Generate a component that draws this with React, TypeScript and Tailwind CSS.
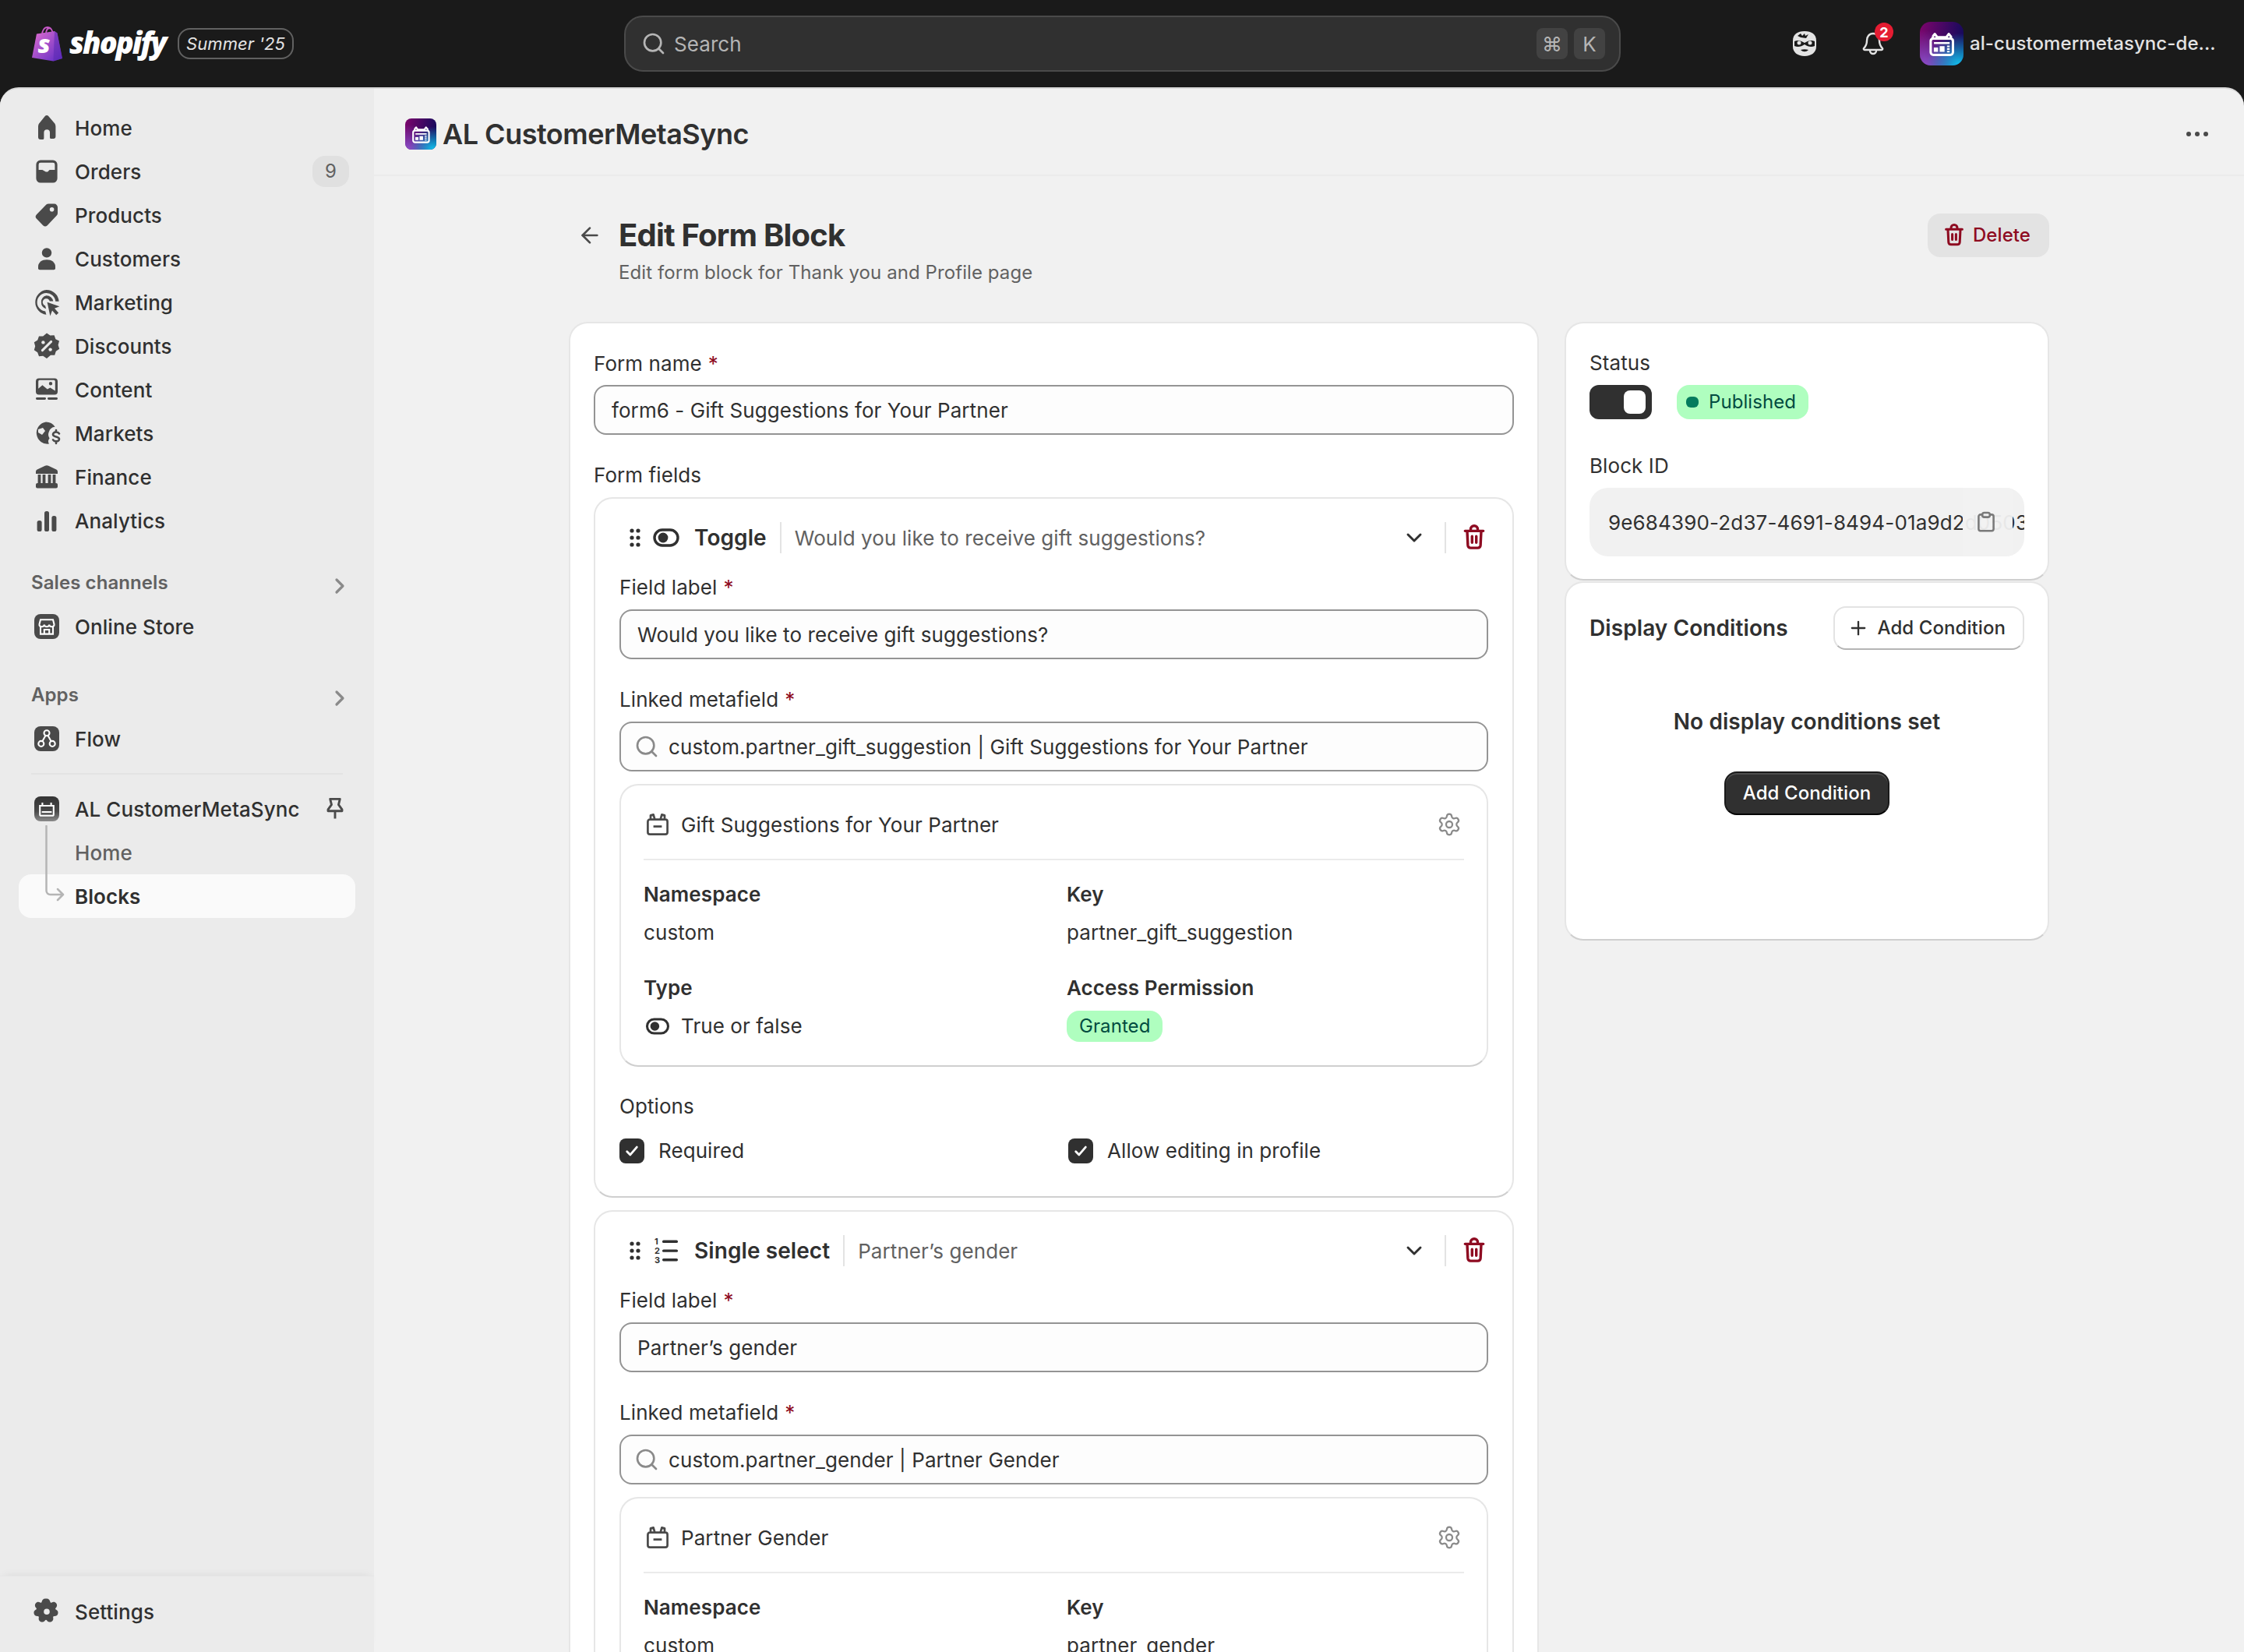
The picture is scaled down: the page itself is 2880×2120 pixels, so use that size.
import { ArrowLeft, ChevronDown, ChevronRight, Plus, Search, Settings as SettingsOutline } from "lucide-react"
import type { ReactNode } from "react"

const Icon20 = ({ children, className = "w-10 h-10 text-[#4a4a4a]" }: { children: ReactNode; className?: string }) => (
  <svg viewBox="0 0 20 20" fill="currentColor" className={className}>
    {children}
  </svg>
)

const navIcons: Record<string, ReactNode> = {
  Home: (
    <path d="M8.700 2.700a1.800 1.800 0 0 1 2.600 0l3.400 4c.7.7 1 1.600 1 2.500v6.300a1.500 1.500 0 0 1-1.500 1.500h-1.400a.8.8 0 0 1-.8-.8V13a1.900 1.900 0 0 0-3.800 0v3.700a.8.8 0 0 1-.8.8H6a1.500 1.500 0 0 1-1.500-1.500V9.200c0-.9.300-1.800 1-2.500z" />
  ),
  Orders: (
    <path
      fillRule="evenodd"
      d="M6 2.800A2.800 2.800 0 0 0 3.200 5.600v8.900A2.800 2.800 0 0 0 6 17.300h8a2.800 2.800 0 0 0 2.800-2.800V5.600A2.800 2.800 0 0 0 14 2.800zM4.800 5.600A1.200 1.200 0 0 1 6 4.400h8a1.200 1.200 0 0 1 1.200 1.200V9h-3.400l-1.200 1.300h-1.200L7.200 9H4.800z"
    />
  ),
  Products: (
    <path
      fillRule="evenodd"
      d="M11.200 2.800h3.600A2.200 2.200 0 0 1 17 5v3.700c0 .6-.2 1.100-.6 1.500l-6 6.400a2 2 0 0 1-2.800 0l-4.100-4.200a2 2 0 0 1 0-2.800l6.200-6.300c.4-.3.900-.5 1.500-.5zM13.300 5a1.400 1.400 0 1 0 0 2.800 1.400 1.400 0 0 0 0-2.800z"
    />
  ),
  Customers: (
    <>
      <circle cx="10" cy="6.200" r="3.100" />
      <path d="M4.500 15c0-2.700 2.400-4.400 5.500-4.400s5.500 1.700 5.500 4.400v1.100a1 1 0 0 1-1 1h-9a1 1 0 0 1-1-1z" />
    </>
  ),
  Marketing: (
    <>
      <path d="M9.800 2a8 8 0 0 1 8 7.400h-2.200a5.900 5.900 0 1 0-6.500 6.400l.6 2.100A8 8 0 0 1 9.800 2z" />
      <path d="M9.800 5.600a4.400 4.400 0 0 1 4.300 3.700h-2.200a2.300 2.300 0 1 0-2.900 2.800l.6 2A4.400 4.400 0 0 1 9.800 5.600z" />
      <path d="M10.300 9.900l7.900 2.700-3.200 1.300 2.600 2.800-1.500 1.400-2.600-2.800-1.300 3.400z" />
    </>
  ),
  Discounts: (
    <>
      <path d="M10 1.800l2.200 1.500 2.600-.2.900 2.500 2.300 1.200-.7 2.600.8 2.500-2.200 1.500-.8 2.500-2.600 0L10 18l-2.400-1.600-2.600.2-.9-2.500-2.200-1.500.7-2.500-.7-2.500 2.200-1.400.9-2.500 2.600.1z" />
      <path d="M12.800 7.200l-5.600 5.600" stroke="#ebebeb" strokeWidth="1.500" strokeLinecap="round" />
      <circle cx="7.700" cy="7.700" r="1.100" fill="#ebebeb" />
      <circle cx="12.300" cy="12.300" r="1.100" fill="#ebebeb" />
    </>
  ),
  Content: (
    <>
      <path
        fillRule="evenodd"
        d="M5 2.800h10a2 2 0 0 1 2 2v6.400a2 2 0 0 1-2 2H5a2 2 0 0 1-2-2V4.800a2 2 0 0 1 2-2zm-.4 6.600 2.600-2.300 3.200 2.600 1.800-1 3.200 2v-6a.8.8 0 0 0-.8-.8H5.400a.8.8 0 0 0-.8.8zM12.500 5a1.100 1.100 0 1 0 0 2.200 1.100 1.100 0 0 0 0-2.200z"
      />
      <rect x="3" y="15" width="6.500" height="1.500" rx=".7" />
      <rect x="10.500" y="15" width="6.500" height="1.500" rx=".7" />
    </>
  ),
  Markets: (
    <>
      <path d="M9.500 2.800a7 7 0 0 1 5.800 3.100 4.500 4.500 0 0 0-3.900 3.200 4 4 0 0 0 .4 4.100 3 3 0 0 0-.3 3.600 7 7 0 1 1-2-14z" />
      <path d="M4.500 7.500l3-1 1.500 2-2 2.500-2.500-1.500z" fill="#ebebeb" />
      <path d="M18 10.200c-.5-.7-1.300-1-2-1-1.100 0-2 .6-2 1.500 0 2 4 1 4 3 0 .9-.9 1.500-2 1.500-.8 0-1.600-.3-2-1M16 8v1.200M16 15.200v1.300" fill="none" stroke="currentColor" strokeWidth="1.300" strokeLinecap="round" />
    </>
  ),
  Finance: (
    <>
      <path d="M8.900 2.900a2.500 2.500 0 0 1 2.200 0l5 2.400c.6.300.9.900.9 1.400v1.300H3V6.700c0-.5.300-1.100.9-1.400z" />
      <rect x="4.300" y="8.500" width="1.900" height="5.500" />
      <rect x="7.300" y="8.500" width="1.900" height="5.500" />
      <rect x="10.800" y="8.500" width="1.900" height="5.500" />
      <rect x="13.800" y="8.500" width="1.900" height="5.500" />
      <rect x="3" y="14" width="14" height="3.200" rx="1" />
    </>
  ),
  Analytics: (
    <>
      <rect x="3.800" y="10" width="3" height="7" rx="1.300" />
      <rect x="8.500" y="4" width="3" height="13" rx="1.300" />
      <rect x="13.200" y="7" width="3" height="10" rx="1.300" />
    </>
  ),
  Settings: (
    <path
      fillRule="evenodd"
      d="M10 1.800c1.200 0 2 .9 2.200 2 .1.500.6.800 1 .5.900-.6 2.100-.6 2.900.4.800 1 .5 2.200-.3 3-.4.300-.3.900.1 1.100 1 .5 1.600 1.400 1.300 2.600-.3 1.200-1.300 1.700-2.400 1.600-.5 0-.9.400-.7.900.3 1.100-.1 2.200-1.200 2.700-1.100.5-2.200 0-2.800-.9-.3-.4-.9-.4-1.200 0-.6.900-1.700 1.400-2.800.9-1.100-.5-1.500-1.600-1.200-2.700.2-.5-.2-.9-.7-.9-1.100.1-2.100-.4-2.400-1.600-.3-1.200.3-2.100 1.300-2.600.4-.2.500-.8.100-1.100-.8-.8-1.100-2-.3-3 .8-1 2-1 2.900-.4.400.3.900 0 1-.5.200-1.100 1-2 2.200-2zm0 6.400a1.900 1.900 0 1 0 0 3.800 1.900 1.900 0 0 0 0-3.800z"
    />
  ),
}

const NavRow = ({ label, badge }: { label: string; badge?: string }) => (
  <div className="flex items-center h-14 mx-6 pl-4 pr-2 text-[26px] font-medium text-[#303030]">
    <Icon20>{navIcons[label]}</Icon20>
    <span className="ml-4">{label}</span>
    {badge && (
      <span className="ml-auto flex items-center justify-center w-[47px] h-10 rounded-2xl bg-[#e0e0e0] text-[24px] font-normal text-[#616161]">
        {badge}
      </span>
    )}
  </div>
)

const SectionHead = ({ label, className }: { label: string; className: string }) => (
  <div className={`flex items-center justify-between h-14 pl-10 pr-7 ${className}`}>
    <span className="text-[24px] font-semibold text-[#616161]">{label}</span>
    <ChevronRight className="w-8 h-8 mt-2 text-[#8a8a8a]" strokeWidth={2.4} />
  </div>
)

const TileIcon = ({ children, grad }: { children: ReactNode; grad?: boolean }) => (
  <div
    className={`flex items-center justify-center w-8 h-8 ml-1 rounded-lg ${
      grad ? "bg-[linear-gradient(180deg,#333_0%,#4a4a4a_60%,#8a8a8a_100%)]" : "bg-[#4a4a4a]"
    }`}
  >
    <svg viewBox="0 0 20 20" fill="none" stroke="white" strokeWidth="1.300" className="w-8 h-8">
      {children}
    </svg>
  </div>
)

const Sidebar = () => (
  <aside className="flex flex-col w-[480px] h-full bg-[#ebebeb]">
    <div className="pt-[22px]">
      {["Home", "Orders", "Products", "Customers", "Marketing", "Discounts", "Content", "Markets", "Finance", "Analytics"].map(
        (item) => (
          <NavRow key={item} label={item} badge={item === "Orders" ? "9" : undefined} />
        ),
      )}
      <SectionHead label="Sales channels" className="mt-6" />
      <div className="flex items-center h-14 mx-6 pl-4 text-[26px] font-medium text-[#303030]">
        <div className="flex items-center w-10">
          <TileIcon>
            <path d="M4 8.500 5 4.500h10l1 4M4 8.500c0 2.200 4 2.200 4 0 0 2.200 4 2.200 4 0 0 2.200 4 2.200 4 0M5 10.500V16h10v-5.500M8 16v-3.500h4V16" />
          </TileIcon>
        </div>
        <span className="ml-4">Online Store</span>
      </div>
      <SectionHead label="Apps" className="mt-8" />
      <div className="flex items-center h-14 mx-6 pl-4 text-[26px] font-medium text-[#303030]">
        <div className="flex items-center w-10">
          <TileIcon>
            <circle cx="10" cy="5.500" r="2.200" />
            <circle cx="5.500" cy="14" r="2.200" />
            <circle cx="14.500" cy="14" r="2.200" />
            <path d="M9 7.500 6.500 12M11 7.500l2.500 4.500" />
          </TileIcon>
        </div>
        <span className="ml-4">Flow</span>
      </div>
      <div className="h-0.5 mx-10 mt-4 bg-[#e3e3e3]" />
      <div className="relative mt-4">
        <div className="flex items-center h-14 mx-6 pl-4 pr-2 text-[26px] font-medium text-[#303030]">
          <div className="flex items-center w-10">
            <TileIcon grad>
              <path d="M4.500 7.500h11v7a1 1 0 0 1-1 1h-9a1 1 0 0 1-1-1zM6.500 7.500V5M13.500 7.500V5M6 12.500h8" />
            </TileIcon>
          </div>
          <span className="ml-4">AL CustomerMetaSync</span>
          <svg viewBox="0 0 20 20" fill="none" stroke="#4a4a4a" strokeWidth="1.600" className="ml-auto w-9 h-9" strokeLinejoin="round">
            <path d="M6.500 3h7l-1 4 2.500 3.500v1H5v-1L7.500 7zM10 11.500V17" />
          </svg>
        </div>
        <div className="flex items-center h-14 mx-6 pl-[72px] text-[26px] font-medium text-[#616161]">Home</div>
        <div className="flex items-center h-14 mx-6 pl-[72px] text-[26px] font-semibold text-[#303030] bg-[#fafafa] rounded-2xl">Blocks</div>
        <svg className="absolute left-[56px] top-[49px] w-[30px] h-[100px]" viewBox="0 0 30 100" fill="none" stroke="#b5b5b5" strokeWidth="2.500" strokeLinecap="round" strokeLinejoin="round">
          <path d="M3.500 1v83a5 5 0 0 0 5 5H24M18 82l7 7-7 7" />
        </svg>
      </div>
    </div>
    <div className="mt-auto pt-[17px] pb-6 shadow-[0_-6px_10px_-6px_rgba(0,0,0,0.08)] border-t border-[#e6e6e6]">
      <NavRow label="Settings" />
    </div>
  </aside>
)

const AppIcon = ({ size }: { size: string }) => (
  <div className={`relative shrink-0 flex items-center justify-center ${size} bg-[radial-gradient(circle_at_90%_100%,#12c5f0_0%,rgba(18,197,240,0)_55%),radial-gradient(circle_at_10%_100%,#8a4fc9_0%,rgba(138,79,201,0)_60%),linear-gradient(100deg,#7d056c_0%,#0a0a5a_100%)]`}>
    <svg viewBox="0 0 24 24" fill="none" stroke="white" strokeWidth="1.500" className="w-[72%] h-[72%]">
      <path d="M5 9V6.500M5 6.500l1.700-2 1.800 2.500h7l1.800-2.500 1.700 2V9M3.500 10a2 2 0 0 1 1.500-2h14a2 2 0 0 1 1.500 2v8.500a2 2 0 0 1-2 2h-13a2 2 0 0 1-2-2z" strokeLinejoin="round" strokeWidth="1.800" />
      <path d="M6 11.500h12" />
      <path d="M6.500 17.500v-2h2v2zM11 17.500v-3h2.500v3zM16 14h2M16 16h2M16 18h2" strokeWidth="1.200" fill="white" />
    </svg>
  </div>
)

const TopBar = () => (
  <header className="flex items-center h-28 text-[#e3e3e3]">
    <div className="flex items-center w-[801px] pl-[41px]">
      <svg viewBox="0 0 40 46" className="w-10 h-[46px] shrink-0">
        <defs>
          <linearGradient id="bag" x1="0" y1="0" x2="1" y2="1">
            <stop offset="0" stopColor="#e36fd0" />
            <stop offset="1" stopColor="#5b2ac4" />
          </linearGradient>
        </defs>
        <path d="M13 12c0-6 3-10 7-10s7 4 7 10M18 11c0-5 2-8 5-8" fill="none" stroke="#c758c8" strokeWidth="1.800" />
        <path d="M6 10.500 29 7l3.500 2.500L39 42l-11.500 3.500L0 41z" fill="url(#bag)" />
        <path d="M29 7l3.500 2.500L39 42l-11.500 3.500z" fill="#5a2ab0" opacity=".55" />
        <text x="15.500" y="35" textAnchor="middle" fontSize="32" fontWeight="800" fontStyle="italic" fill="white" fontFamily="Open Sans, sans-serif">
          s
        </text>
      </svg>
      <span className="ml-2 w-[130px] shrink-0 -mt-1 text-[38px] leading-none font-extrabold italic tracking-[-2px] text-white font-['Open_Sans',sans-serif]">shopify</span>
      <span className="flex items-center justify-center shrink-0 w-[149px] h-10 ml-[9px] border-2 border-[#616161] rounded-2xl text-[22px] italic text-[#e3e3e3]">
        Summer &apos;25
      </span>
    </div>
    <div className="flex items-center w-[1279px] h-[72px] pl-5 pr-[18px] bg-[#303030] border-2 border-[#4a4a4a] rounded-3xl">
      <Search className="w-8 h-8 text-[#b5b5b5]" strokeWidth={2} />
      <span className="ml-[10px] text-[26px] text-[#b5b5b5]">Search</span>
      <div className="flex items-center gap-2 ml-auto">
        <span className="flex items-center justify-center w-10 h-10 rounded-lg bg-[#424242] text-[26px] text-[#b5b5b5]">⌘</span>
        <span className="flex items-center justify-center w-10 h-10 rounded-lg bg-[#424242] text-[26px] text-[#b5b5b5]">K</span>
      </div>
    </div>
    <div className="flex items-center ml-[221px]">
      <svg viewBox="0 0 30 32" className="w-[30px] h-8" fill="#e3e3e3">
        <path d="M15 0c9 0 15 4 15 12v8c0 7-6 12-15 12S0 27 0 20v-8C0 4 6 0 15 0z" />
        <path d="M2 13c4-2 8-1 13 2 5-3 9-4 13-2v6c-4 2-9 1-13-2-4 3-9 4-13 2z" fill="#1a1a1a" />
        <circle cx="8" cy="15" r="2.500" />
        <circle cx="22" cy="15" r="2.500" />
        <path d="M10 24c3 3 7 3 10 0-3-1-7-1-10 0z" fill="#1a1a1a" />
        <path d="M6 6l4-3 2 3 3-3 1 3 4-2-3 5-7-1z" fill="#1a1a1a" />
      </svg>
      <div className="relative ml-[59px]">
        <svg viewBox="0 0 28 30" fill="none" stroke="#e3e3e3" strokeWidth="2.400" className="w-7 h-[30px]">
          <path d="M14 2c-5 0-8 4-8 9 0 5-1 7-4 10-.5.700 0 2 1 2h22c1 0 1.500-1.300 1-2-3-3-4-5-4-10 0-5-3-9-8-9z" />
          <path d="M10 24a4 4 0 0 0 8 0" />
        </svg>
        <span className="absolute -top-3 left-4 flex items-center justify-center w-6 h-6 rounded-full bg-[#e51c32] text-[18px] font-bold text-white">2</span>
      </div>
      <div className="ml-[46px] rounded-[14px] overflow-hidden">
        <AppIcon size="w-14 h-14" />
      </div>
      <span className="ml-2 text-[24px] font-medium text-[#e3e3e3] whitespace-nowrap">al-customermetasync-de...</span>
    </div>
  </header>
)

const Star = () => <span className="ml-2 text-[#8e0b21]">*</span>

const TextInput = ({ value, search }: { value: string; search?: boolean }) => (
  <div className="flex items-center h-16 px-[21px] bg-[#fdfdfd] border-2 border-[#949494] rounded-2xl text-[26px] text-[#303030]">
    {search && <Search className="w-8 h-8 -ml-1 mr-3 text-[#8a8a8a]" strokeWidth={2} />}
    {value}
  </div>
)

const cardClass = "bg-white border-2 border-[#e6e6e6] border-b-[#cfcfcf] rounded-3xl"

const ToggleGlyph = ({ className }: { className: string }) => (
  <svg viewBox="0 0 20 20" fill="none" stroke="currentColor" strokeWidth="1.700" className={className}>
    <rect x="2.500" y="5" width="15" height="10" rx="5" />
    <circle cx="8" cy="10" r="3.200" fill="currentColor" stroke="none" />
  </svg>
)

const ListGlyph = ({ className }: { className: string }) => (
  <svg viewBox="0 0 20 20" fill="currentColor" className={className}>
    <rect x="7.500" y="3.300" width="10" height="1.700" rx=".8" />
    <rect x="7.500" y="9.200" width="10" height="1.700" rx=".8" />
    <rect x="7.500" y="15" width="10" height="1.700" rx=".8" />
    <text x="2.500" y="6" fontSize="5.500" fontWeight="700" fontFamily="Inter, sans-serif">1</text>
    <text x="2.500" y="12" fontSize="5.500" fontWeight="700" fontFamily="Inter, sans-serif">2</text>
    <text x="2.500" y="18" fontSize="5.500" fontWeight="700" fontFamily="Inter, sans-serif">3</text>
  </svg>
)

const TrashGlyph = ({ className }: { className: string }) => (
  <svg viewBox="0 0 20 20" fill="none" stroke="currentColor" strokeWidth="1.900" strokeLinecap="round" strokeLinejoin="round" className={className}>
    <path d="M3.500 5.200h13M7.500 5V4a2.500 2.500 0 0 1 5 0v1M5 5.500l.5 10a2 2 0 0 0 2 1.800h5a2 2 0 0 0 2-1.800l.5-10M8.500 9v4.500M11.500 9v4.500" />
  </svg>
)

const MetaGlyph = () => (
  <svg viewBox="0 0 20 20" fill="none" stroke="#4a4a4a" strokeWidth="1.500" strokeLinejoin="round" className="w-9 h-9">
    <path d="M3 8a1.500 1.500 0 0 1 1.500-1.500h11A1.500 1.500 0 0 1 17 8v7.500a1.500 1.500 0 0 1-1.500 1.500h-11A1.500 1.500 0 0 1 3 15.500zM5 6.500V3.500l2-.5 1 3.500M15 6.500V3.500l-2-.5-1 3.500M7 11.500h6" />
  </svg>
)

const Check = () => (
  <span className="flex items-center justify-center w-8 h-8 rounded-lg bg-[#303030]">
    <svg viewBox="0 0 20 20" fill="none" stroke="white" strokeWidth="2" strokeLinecap="round" strokeLinejoin="round" className="w-7 h-7">
      <path d="M5.500 10.500 8.500 13.500 14.500 6.500" />
    </svg>
  </span>
)

interface FieldProps {
  kind: string
  list?: boolean
  title: string
  linked: string
  metaTitle: string
  metaKey: string
}

const FieldCard = ({ kind, list, title, linked, metaTitle, metaKey }: FieldProps) => (
  <div className={`${cardClass} px-[31px] pt-[22px] pb-[42px]`}>
    <div className="flex items-center h-14 text-[26px]">
      <svg viewBox="0 0 20 20" fill="#303030" className="w-10 h-10 shrink-0">
        <circle cx="8" cy="5.500" r="1.300" />
        <circle cx="12" cy="5.500" r="1.300" />
        <circle cx="8" cy="10" r="1.300" />
        <circle cx="12" cy="10" r="1.300" />
        <circle cx="8" cy="14.500" r="1.300" />
        <circle cx="12" cy="14.500" r="1.300" />
      </svg>
      {list ? <ListGlyph className="w-10 h-10 shrink-0 text-[#303030]" /> : <ToggleGlyph className="w-10 h-10 shrink-0 text-[#303030]" />}
      <span className="ml-4 text-[28px] font-semibold text-[#303030]">{kind}</span>
      <span className="w-0.5 h-10 mx-[17px] bg-[#e3e3e3]" />
      <span className="text-[#616161]">{title}</span>
      <ChevronDown className="ml-auto w-8 h-8 text-[#303030]" strokeWidth={2.2} />
      <span className="w-0.5 h-10 ml-[23px] mr-[18px] bg-[#e3e3e3]" />
      <TrashGlyph className="w-9 h-9 text-[#8e0b21]" />
    </div>
    <div className="mt-5 text-[26px] leading-8 text-[#303030]">
      Field label
      <Star />
    </div>
    <div className="mt-3">
      <TextInput value={title} />
    </div>
    <div className="mt-[36px] text-[26px] leading-8 text-[#303030]">
      Linked metafield
      <Star />
    </div>
    <div className="mt-3">
      <TextInput search value={linked} />
    </div>
    <div className={`${cardClass} mt-4 px-[29px] pt-[30px] pb-[30px]`}>
      <div className="flex items-center h-10 text-[26px] text-[#303030]">
        <MetaGlyph />
        <span className="ml-3">{metaTitle}</span>
        <SettingsOutline className="ml-auto mr-[3px] w-8 h-8 text-[#8a8a8a]" strokeWidth={1.700} />
      </div>
      <div className="h-0.5 mt-6 bg-[#ebebeb]" />
      <div className="grid grid-cols-[543px_1fr] mt-7 text-[26px] leading-8 text-[#303030]">
        <div>
          <div className="font-semibold">Namespace</div>
          <div className="mt-[17px]">custom</div>
        </div>
        <div>
          <div className="font-semibold">Key</div>
          <div className="mt-[17px]">{metaKey}</div>
        </div>
        <div className="mt-[39px]">
          <div className="font-semibold">Type</div>
          <div className="flex items-center h-10 mt-[13px]">
            <ToggleGlyph className="w-9 h-9 text-[#303030]" />
            <span className="ml-3">True or false</span>
          </div>
        </div>
        <div className="mt-[39px]">
          <div className="font-semibold">Access Permission</div>
          <div className="flex items-center h-10 mt-[13px]">
            <span className="flex items-center h-10 px-4 rounded-2xl bg-[#affebf] text-[24px] text-[#014b40]">Granted</span>
          </div>
        </div>
      </div>
    </div>
    <div className="mt-[35px] text-[26px] leading-8 text-[#303030]">Options</div>
    <div className="grid grid-cols-[576px_1fr] mt-[25px] text-[26px] leading-8 text-[#303030]">
      <div className="flex items-center gap-[18px]">
        <Check />
        Required
      </div>
      <div className="flex items-center gap-[18px]">
        <Check />
        Allow editing in profile
      </div>
    </div>
  </div>
)

const RightColumn = () => (
  <div className="flex flex-col gap-px">
    <div className={`${cardClass} px-[30px] pt-[35px] pb-[29px]`}>
      <div className="text-[26px] leading-8 text-[#303030]">Status</div>
      <div className="flex items-center mt-3">
        <div className="flex items-center justify-end w-20 h-11 pr-2 rounded-xl bg-[#303030]">
          <span className="w-7 h-[30px] rounded-lg bg-white" />
        </div>
        <div className="flex items-center h-11 ml-8 pl-3 pr-4 rounded-2xl bg-[#affebf] text-[24px] text-[#014b40]">
          <span className="w-4 h-[14px] rounded-md bg-[#047b5d]" />
          <span className="ml-[13px]">Published</span>
        </div>
      </div>
      <div className="mt-11 text-[26px] leading-8 text-[#303030]">Block ID</div>
      <div className="relative flex items-center h-[88px] mt-3 pl-6 rounded-3xl bg-[#f1f1f1] overflow-hidden text-[26px] tracking-[0.15px] text-[#303030] whitespace-nowrap">
        9e684390-2d37-4691-8494-01a9d2d0503f
        <div className="absolute top-0 bottom-0 left-[479px] flex items-center justify-center w-[64px] bg-[#f1f1f1]/95">
          <svg viewBox="0 0 20 20" fill="none" stroke="#7a7a7a" strokeWidth="1.600" strokeLinejoin="round" className="w-8 h-8 -ml-1">
            <path d="M7 4H5.500A1.500 1.500 0 0 0 4 5.500v10A1.500 1.500 0 0 0 5.500 17h9a1.500 1.500 0 0 0 1.500-1.500v-10A1.500 1.500 0 0 0 14.500 4H13" />
            <rect x="7" y="2.500" width="6" height="3.500" rx="1.500" />
          </svg>
        </div>
      </div>
    </div>
    <div className={`${cardClass} px-[30px] pt-[30px] pb-[159px]`}>
      <div className="flex items-center justify-between">
        <span className="text-[28px] font-semibold text-[#303030]">Display Conditions</span>
        <div className="flex items-center h-14 pl-4 pr-[22px] bg-white border-2 border-[#e3e3e3] border-b-[#b5b5b5] rounded-2xl text-[24px] font-medium text-[#303030]">
          <Plus className="w-7 h-7" strokeWidth={2} />
          <span className="ml-[10px]">Add Condition</span>
        </div>
      </div>
      <div className="mt-[76px] text-center text-[28px] leading-8 font-semibold text-[#303030]">No display conditions set</div>
      <div className="flex justify-center mt-12">
        <div className="flex items-center justify-center w-[212px] h-14 bg-[#303030] border-2 border-[#1a1a1a] border-b-black rounded-2xl text-[24px] font-medium text-white shadow-[inset_0_2px_0_rgba(255,255,255,0.15)]">
          Add Condition
        </div>
      </div>
    </div>
  </div>
)

export default function App() {
  return (
    <div className="w-[2880px] h-[2120px] overflow-hidden bg-[#1a1a1a] tracking-[0.08px] font-[Inter,sans-serif]">
      <TopBar />
      <div className="flex h-[2008px] overflow-hidden rounded-t-3xl border-t-2 border-[#d9d9d9] bg-[#f1f1f1]">
        <Sidebar />
        <main className="flex-1 min-w-0">
          <div className="flex items-center h-[112px] pt-[6px] pl-10 pr-[46px] border-b-2 border-[#ebebeb]">
            <div className="rounded-lg overflow-hidden">
              <AppIcon size="w-10 h-10" />
            </div>
            <span className="ml-2 text-[36px] font-semibold tracking-[-0.5px] text-[#303030]">AL CustomerMetaSync</span>
            <div className="flex items-center gap-[5px] ml-auto">
              <span className="w-[6px] h-[6px] rounded-full bg-[#4a4a4a]" />
              <span className="w-[6px] h-[6px] rounded-full bg-[#4a4a4a]" />
              <span className="w-[6px] h-[6px] rounded-full bg-[#4a4a4a]" />
            </div>
          </div>
          <div className="w-[1900px] mx-auto">
            <div className="flex items-start justify-between pt-12 mb-[47px]">
              <div className="flex items-start">
                <ArrowLeft className="w-8 h-8 mt-3 ml-[11px] text-[#4a4a4a]" strokeWidth={2} />
                <div className="ml-[21px]">
                  <div className="flex items-center h-14 text-[40px] font-bold tracking-[-0.8px] text-[#303030]">Edit Form Block</div>
                  <div className="mt-1 text-[24px] leading-8 text-[#616161]">Edit form block for Thank you and Profile page</div>
                </div>
              </div>
              <div className="flex items-center h-14 pl-[18px] pr-6 rounded-2xl bg-[#e3e3e3] text-[24px] font-medium text-[#8e0b21]">
                <TrashGlyph className="w-8 h-8" />
                <span className="ml-2">Delete</span>
              </div>
            </div>
            <div className="grid grid-cols-[1245px_622px] gap-[33px] items-start">
              <div className={`${cardClass} px-[30px] pt-9`}>
                <div className="text-[26px] leading-8 text-[#303030]">
                  Form name
                  <Star />
                </div>
                <div className="mt-[11px]">
                  <TextInput value="form6 - Gift Suggestions for Your Partner" />
                </div>
                <div className="mt-9 text-[26px] leading-8 text-[#303030]">Form fields</div>
                <div className="flex flex-col gap-4 mt-3">
                  <FieldCard
                    kind="Toggle"
                    title="Would you like to receive gift suggestions?"
                    linked="custom.partner_gift_suggestion | Gift Suggestions for Your Partner"
                    metaTitle="Gift Suggestions for Your Partner"
                    metaKey="partner_gift_suggestion"
                  />
                  <FieldCard
                    kind="Single select"
                    list
                    title="Partner’s gender"
                    linked="custom.partner_gender | Partner Gender"
                    metaTitle="Partner Gender"
                    metaKey="partner_gender"
                  />
                </div>
              </div>
              <RightColumn />
            </div>
          </div>
        </main>
      </div>
    </div>
  )
}
